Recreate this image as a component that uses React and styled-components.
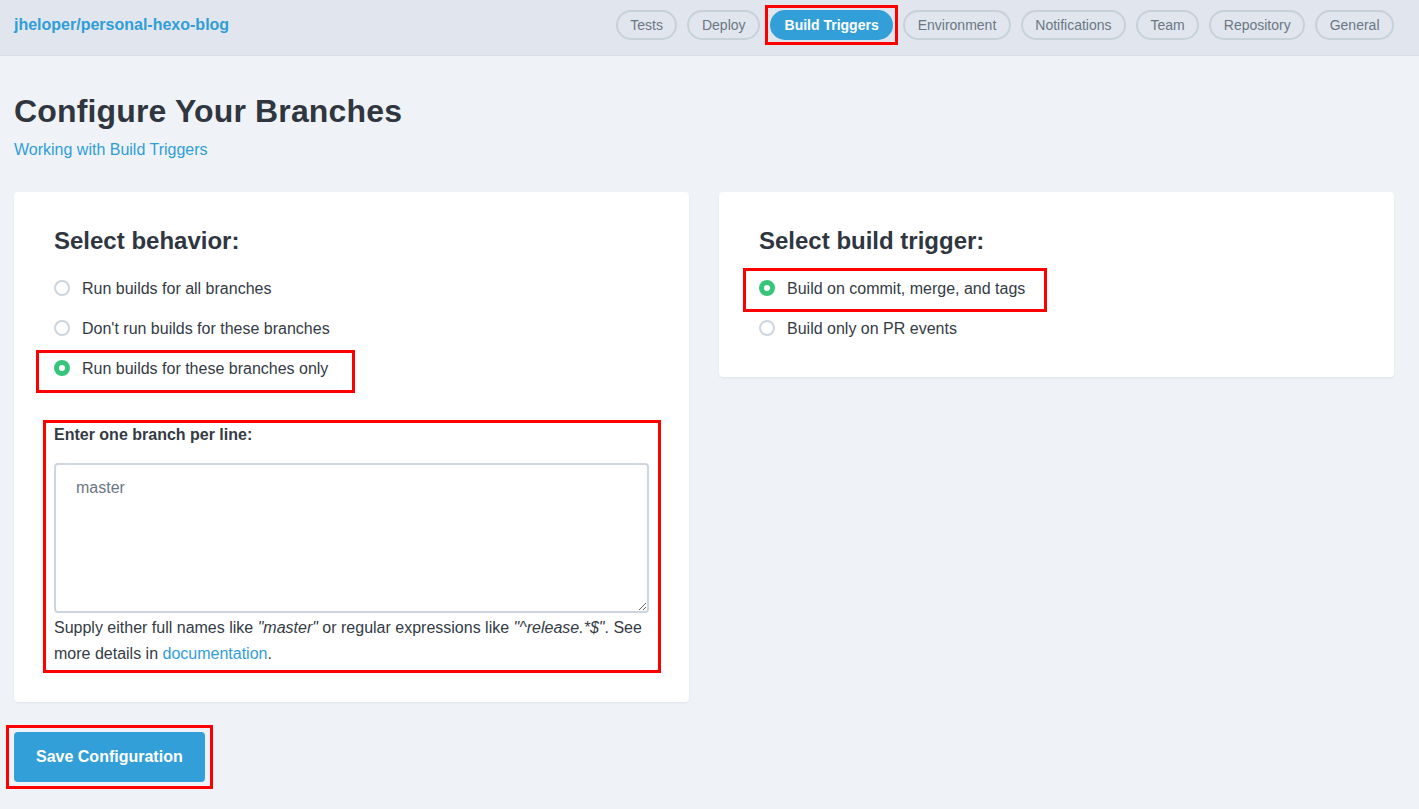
import React from 'react'
import styled, { createGlobalStyle } from 'styled-components'

const GlobalStyle = createGlobalStyle`
  html, body {
    margin: 0;
    padding: 0;
    background: #eff3f7;
    font-family: "Liberation Sans", Arial, sans-serif;
    color: #343b45;
  }
  * { box-sizing: border-box; }
`

const tabs = ['Tests', 'Deploy', 'Build Triggers', 'Environment', 'Notifications', 'Team', 'Repository', 'General']

const App = () => (
  <>
    <GlobalStyle />
    <Header>
      <RepoName href="#">jheloper/personal-hexo-blog</RepoName>
      <Nav>
        {tabs.map(t => (
          t === 'Build Triggers'
            ? <Marked key={t} $t={-5} $r={-5} $b={-5} $l={-5}><Tab $active>{t}</Tab></Marked>
            : <Tab key={t}>{t}</Tab>
        ))}
      </Nav>
    </Header>
    <Main>
      <Title>Configure Your Branches</Title>
      <DocLink href="#">Working with Build Triggers</DocLink>
      <Columns>
        <Card>
          <CardTitle>Select behavior:</CardTitle>
          <RadioList>
            <RadioRow><Radio /> Run builds for all branches</RadioRow>
            <RadioRow><Radio /> Don't run builds for these branches</RadioRow>
            <Marked $t={1} $r={-27} $b={-4} $l={-18}>
              <RadioRow><Radio $checked /> Run builds for these branches only</RadioRow>
            </Marked>
          </RadioList>
          <BranchSection>
            <Marked $full $t={-5} $r={-12} $b={-6} $l={-11}>
              <FieldLabel>Enter one branch per line:</FieldLabel>
              <BranchInput defaultValue="master" />
              <Help>
                Supply either full names like <em>"master"</em> or regular expressions like <em>"^release.*$"</em>. See
                more details in <HelpLink href="#">documentation</HelpLink>.
              </Help>
            </Marked>
          </BranchSection>
        </Card>
        <Card $short>
          <CardTitle>Select build trigger:</CardTitle>
          <RadioList>
            <Marked $t={-1} $r={-22} $b={-3} $l={-16}>
              <RadioRow><Radio $checked /> Build on commit, merge, and tags</RadioRow>
            </Marked>
            <RadioRow><Radio /> Build only on PR events</RadioRow>
          </RadioList>
        </Card>
      </Columns>
      <Actions>
        <Marked $t={-7} $r={-8} $b={-7} $l={-8}>
          <SaveButton>Save Configuration</SaveButton>
        </Marked>
      </Actions>
    </Main>
  </>
)

export default App

const Header = styled.header`
  height: 56px;
  display: flex;
  align-items: flex-start;
  justify-content: space-between;
  padding: 10px 25px 0 14px;
  background: #e1e6ee;
  border-bottom: 1px solid #d6dde5;
`

const RepoName = styled.a`
  line-height: 30px;
  font-size: 16px;
  font-weight: bold;
  color: #2f9ed8;
  text-decoration: none;
`

const Nav = styled.nav`
  display: flex;
  align-items: center;
  gap: 10px;
`

const Tab = styled.span`
  display: inline-flex;
  align-items: center;
  height: 30px;
  padding: 0 12.5px;
  border-radius: 15px;
  font-size: 14px;
  color: ${p => (p.$active ? '#ffffff' : '#6b7684')};
  font-weight: ${p => (p.$active ? 'bold' : 'normal')};
  background: ${p => (p.$active ? '#339fd8' : 'transparent')};
  border: 2px solid ${p => (p.$active ? '#339fd8' : '#c7d1da')};
`

const Marked = styled.div`
  position: relative;
  width: ${p => (p.$full ? 'auto' : 'fit-content')};
  &::after {
    content: '';
    position: absolute;
    top: ${p => p.$t}px;
    right: ${p => p.$r}px;
    bottom: ${p => p.$b}px;
    left: ${p => p.$l}px;
    border: 3px solid #ff0000;
    pointer-events: none;
  }
`

const Main = styled.main`
  padding: 36px 25px 40px 14px;
`

const Title = styled.h1`
  margin: 0;
  font-size: 32px;
  line-height: 38px;
  font-weight: bold;
  letter-spacing: 0.15px;
  color: #2f3640;
`

const DocLink = styled.a`
  display: block;
  margin-top: 10px;
  font-size: 16px;
  line-height: 20px;
  color: #2f9ed8;
  text-decoration: none;
`

const Columns = styled.div`
  display: grid;
  grid-template-columns: 1fr 1fr;
  gap: 30px;
  align-items: start;
  margin-top: 32px;
`

const Card = styled.section`
  background: #ffffff;
  border-radius: 4px;
  box-shadow: 0 1px 2px rgba(40, 55, 70, 0.08);
  padding: 35px 40px ${p => (p.$short ? '28px' : '35px')};
`

const CardTitle = styled.h2`
  margin: 0 0 14px;
  font-size: 24px;
  line-height: 28px;
  font-weight: bold;
  color: #2f3640;
`

const RadioList = styled.div`
  display: flex;
  flex-direction: column;
`

const RadioRow = styled.label`
  display: flex;
  align-items: center;
  gap: 12px;
  height: 40px;
  font-size: 16px;
  color: #343b45;
`

const Radio = styled.span`
  width: 16px;
  height: 16px;
  border-radius: 50%;
  flex-shrink: 0;
  margin-top: -2px;
  background: #ffffff;
  border: ${p => (p.$checked ? '5px solid #36c57a' : '2px solid #cdd5de')};
`

const BranchSection = styled.div`
  padding-top: 36px;
`

const FieldLabel = styled.div`
  font-size: 16px;
  line-height: 20px;
  font-weight: bold;
  color: #343b45;
`

const BranchInput = styled.textarea`
  display: block;
  width: 100%;
  height: 150px;
  margin-top: 18px;
  padding: 14px 20px;
  border: 2px solid #cdd5de;
  border-radius: 4px;
  font-family: "Liberation Sans", Arial, sans-serif;
  font-size: 16px;
  color: #6b7684;
  resize: vertical;
  outline: none;
`

const Help = styled.p`
  margin: 2px 0 0;
  font-size: 16px;
  line-height: 26px;
  color: #343b45;
`

const HelpLink = styled.a`
  color: #2f9ed8;
  text-decoration: none;
`

const Actions = styled.div`
  margin-top: 30px;
`

const SaveButton = styled.button`
  display: block;
  height: 50px;
  padding: 0 22px;
  border: none;
  border-radius: 4px;
  background: #339fd8;
  color: #ffffff;
  font-family: "Liberation Sans", Arial, sans-serif;
  font-size: 16px;
  font-weight: bold;
  cursor: pointer;
`
